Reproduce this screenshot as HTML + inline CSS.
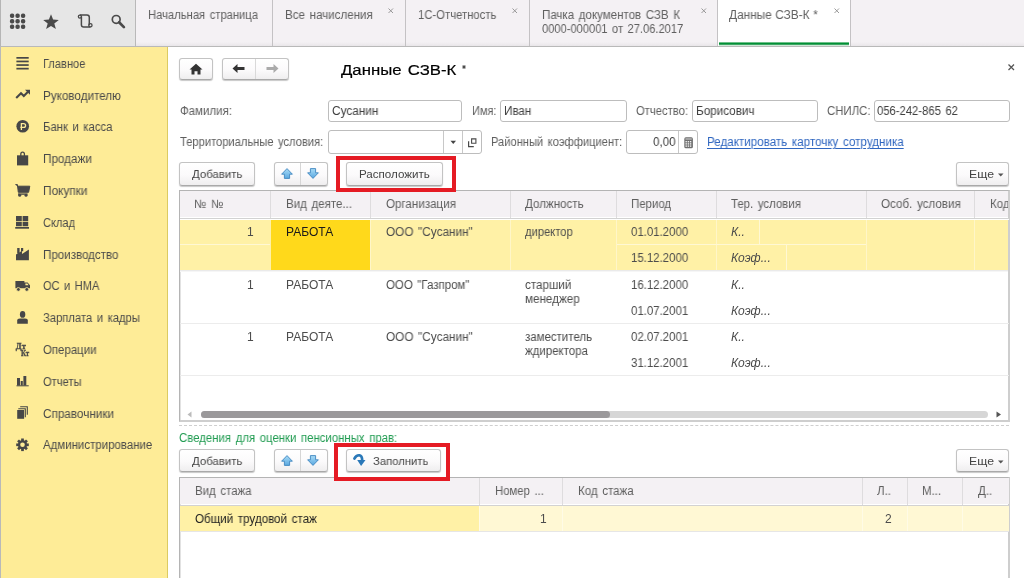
<!DOCTYPE html>
<html><head><meta charset="utf-8"><style>
html,body{margin:0;padding:0;}
body{width:1024px;height:578px;position:relative;overflow:hidden;background:#fff;font-family:"Liberation Sans",sans-serif;}
.a{position:absolute;}
.t{position:absolute;white-space:nowrap;transform-origin:0 0;will-change:transform;}
svg{will-change:transform;}
svg.a{overflow:visible;}
</style></head><body>
<div class="a" style="left:0px;top:0px;width:136px;height:46px;background:#e6e6e6;"></div>
<div class="a" style="left:0px;top:0px;width:1px;height:46px;background:#b5b5b5;"></div>
<div class="a" style="left:136px;top:0px;width:888px;height:46px;background:linear-gradient(#f4f1f4 0,#f4f1f4 42px,#e9e6e9 46px);"></div>
<div class="a" style="left:135px;top:0px;width:1px;height:46px;background:#b9b9b9;"></div>
<div class="a" style="left:0px;top:46px;width:1024px;height:1px;background:#b9b9b9;"></div>
<svg class="a" style="left:10px;top:14px" width="15" height="15" viewBox="0 0 15 15"><rect x="-0.1" y="-0.4" width="4.4" height="4.4" rx="1.9" fill="#4a4a4a"/><rect x="-0.1" y="5.1" width="4.4" height="4.4" rx="1.9" fill="#4a4a4a"/><rect x="-0.1" y="10.6" width="4.4" height="4.4" rx="1.9" fill="#4a4a4a"/><rect x="5.4" y="-0.4" width="4.4" height="4.4" rx="1.9" fill="#4a4a4a"/><rect x="5.4" y="5.1" width="4.4" height="4.4" rx="1.9" fill="#4a4a4a"/><rect x="5.4" y="10.6" width="4.4" height="4.4" rx="1.9" fill="#4a4a4a"/><rect x="10.9" y="-0.4" width="4.4" height="4.4" rx="1.9" fill="#4a4a4a"/><rect x="10.9" y="5.1" width="4.4" height="4.4" rx="1.9" fill="#4a4a4a"/><rect x="10.9" y="10.6" width="4.4" height="4.4" rx="1.9" fill="#4a4a4a"/></svg>
<svg class="a" style="left:43px;top:14px" width="16" height="16" viewBox="0 0 16 16"><path d="M8 0.3 L10.1 5.6 L15.8 5.9 L11.3 9.5 L12.9 15.1 L8 11.9 L3.1 15.1 L4.7 9.5 L0.2 5.9 L5.9 5.6 Z" fill="#4a4a4a"/></svg>
<svg class="a" style="left:0;top:0" width="136" height="46" viewBox="0 0 136 46"><path d="M79.8 14.9 H87 Q89.3 14.9 89.3 17.2 V25.2 M81.4 16.6 V24.7 Q81.4 27 83.7 27 H90.5" fill="none" stroke="#4a4a4a" stroke-width="1.5"/><circle cx="79.9" cy="16.6" r="1.55" fill="none" stroke="#4a4a4a" stroke-width="1.3"/><circle cx="90.4" cy="25.3" r="1.65" fill="none" stroke="#4a4a4a" stroke-width="1.3"/><circle cx="116.2" cy="19.4" r="3.9" fill="none" stroke="#4a4a4a" stroke-width="1.7"/><path d="M119.1 22.3 L123.9 27.1" stroke="#4a4a4a" stroke-width="2.7" stroke-linecap="round"/></svg>
<div class="a" style="left:272px;top:0px;width:1px;height:46px;background:#c4c2c4;"></div>
<div class="a" style="left:405px;top:0px;width:1px;height:46px;background:#c4c2c4;"></div>
<div class="a" style="left:529px;top:0px;width:1px;height:46px;background:#c4c2c4;"></div>
<div class="a" style="left:717px;top:0px;width:1px;height:46px;background:#c4c2c4;"></div>
<div class="a" style="left:850px;top:0px;width:1px;height:46px;background:#c4c2c4;"></div>
<div class="a" style="left:718px;top:0px;width:132px;height:46px;background:#ffffff;"></div>
<div class="a" style="left:719px;top:42px;width:130px;height:1px;background:#6cbf88;"></div>
<div class="a" style="left:719px;top:43px;width:130px;height:1px;background:#009035;"></div>
<div class="a" style="left:719px;top:44px;width:130px;height:1px;background:#3da664;"></div>
<div class="a" style="left:719px;top:45px;width:130px;height:1px;background:#cfe8d7;"></div>
<div class="t" style="left:148.00px;top:8.94px;font-size:12px;line-height:12px;color:#606060;transform:scaleX(0.9353);word-spacing:1.5px;">Начальная страница</div>
<div class="t" style="left:284.50px;top:8.94px;font-size:12px;line-height:12px;color:#606060;transform:scaleX(0.9645);word-spacing:1.5px;">Все начисления</div>
<div class="t" style="left:417.60px;top:8.94px;font-size:12px;line-height:12px;color:#606060;transform:scaleX(0.9411);word-spacing:1.5px;">1С-Отчетность</div>
<div class="t" style="left:541.60px;top:8.94px;font-size:12px;line-height:12px;color:#606060;transform:scaleX(0.9607);word-spacing:1.5px;">Пачка документов СЗВ К</div>
<div class="t" style="left:541.60px;top:23.34px;font-size:12px;line-height:12px;color:#606060;transform:scaleX(0.9267);word-spacing:1.5px;">0000-000001 от 27.06.2017</div>
<div class="t" style="left:729.30px;top:8.94px;font-size:12px;line-height:12px;color:#606060;transform:scaleX(0.9846);word-spacing:0.3px;">Данные СЗВ-К *</div>
<svg class="a" style="left:388px;top:8px" width="5.5" height="5.5" viewBox="0 0 5.5 5.5"><path d="M0.5 0.5 L5.0 5.0 M5.0 0.5 L0.5 5.0" stroke="#8f8f8f" stroke-width="0.9"/></svg>
<svg class="a" style="left:512px;top:8px" width="5.5" height="5.5" viewBox="0 0 5.5 5.5"><path d="M0.5 0.5 L5.0 5.0 M5.0 0.5 L0.5 5.0" stroke="#8f8f8f" stroke-width="0.9"/></svg>
<svg class="a" style="left:700.5px;top:8px" width="5.5" height="5.5" viewBox="0 0 5.5 5.5"><path d="M0.5 0.5 L5.0 5.0 M5.0 0.5 L0.5 5.0" stroke="#8f8f8f" stroke-width="0.9"/></svg>
<svg class="a" style="left:834px;top:8px" width="5.5" height="5.5" viewBox="0 0 5.5 5.5"><path d="M0.5 0.5 L5.0 5.0 M5.0 0.5 L0.5 5.0" stroke="#8f8f8f" stroke-width="0.9"/></svg>
<div class="a" style="left:0px;top:47px;width:168px;height:531px;background:#feec97;"></div>
<div class="a" style="left:0px;top:47px;width:1px;height:531px;background:#b9b9b9;"></div>
<div class="a" style="left:167px;top:47px;width:1px;height:531px;background:#dccb62;"></div>
<div class="t" style="left:43.00px;top:57.74px;font-size:12px;line-height:12px;color:#4a4a4a;transform:scaleX(0.9226);word-spacing:1.5px;">Главное</div>
<div class="t" style="left:43.00px;top:89.54px;font-size:12px;line-height:12px;color:#4a4a4a;transform:scaleX(0.9731);word-spacing:1.5px;">Руководителю</div>
<div class="t" style="left:43.00px;top:121.34px;font-size:12px;line-height:12px;color:#4a4a4a;transform:scaleX(0.9421);word-spacing:1.5px;">Банк и касса</div>
<div class="t" style="left:43.00px;top:153.14px;font-size:12px;line-height:12px;color:#4a4a4a;transform:scaleX(0.9734);word-spacing:1.5px;">Продажи</div>
<div class="t" style="left:43.00px;top:184.94px;font-size:12px;line-height:12px;color:#4a4a4a;transform:scaleX(0.9835);word-spacing:1.5px;">Покупки</div>
<div class="t" style="left:43.00px;top:216.74px;font-size:12px;line-height:12px;color:#4a4a4a;transform:scaleX(0.9229);word-spacing:1.5px;">Склад</div>
<div class="t" style="left:43.00px;top:248.54px;font-size:12px;line-height:12px;color:#4a4a4a;transform:scaleX(0.9648);word-spacing:1.5px;">Производство</div>
<div class="t" style="left:43.00px;top:280.34px;font-size:12px;line-height:12px;color:#4a4a4a;transform:scaleX(0.9241);word-spacing:1.5px;">ОС и НМА</div>
<div class="t" style="left:43.00px;top:312.14px;font-size:12px;line-height:12px;color:#4a4a4a;transform:scaleX(0.9370);word-spacing:1.5px;">Зарплата и кадры</div>
<div class="t" style="left:43.00px;top:343.94px;font-size:12px;line-height:12px;color:#4a4a4a;transform:scaleX(0.9526);word-spacing:1.5px;">Операции</div>
<div class="t" style="left:43.00px;top:375.74px;font-size:12px;line-height:12px;color:#4a4a4a;transform:scaleX(0.9326);word-spacing:1.5px;">Отчеты</div>
<div class="t" style="left:43.00px;top:407.54px;font-size:12px;line-height:12px;color:#4a4a4a;transform:scaleX(0.9765);word-spacing:1.5px;">Справочники</div>
<div class="t" style="left:43.00px;top:439.34px;font-size:12px;line-height:12px;color:#4a4a4a;transform:scaleX(0.9551);word-spacing:1.5px;">Администрирование</div>
<svg class="a" style="left:0;top:0" width="168" height="578" viewBox="0 0 168 578"><rect x="16.4" y="57.0" width="12.3" height="1.7" fill="#474747"/><rect x="16.4" y="60.6" width="12.3" height="1.7" fill="#474747"/><rect x="16.4" y="64.2" width="12.3" height="1.7" fill="#474747"/><rect x="16.4" y="67.8" width="12.3" height="1.7" fill="#474747"/><path d="M16.2 98 L21 93.3 L23.8 96 L28 91.8" fill="none" stroke="#474747" stroke-width="2.1" stroke-linejoin="miter"/><path d="M25 89.8 H30 V94.8 Z" fill="#474747"/><circle cx="22.7" cy="126.3" r="6.3" fill="#474747"/><path d="M21.4 130 V123.6 H23.6 Q25.6 123.6 25.6 125.5 Q25.6 127.4 23.6 127.4 H20.3" fill="none" stroke="#feec97" stroke-width="1.3"/><path d="M17 155.3 H28.2 V165.4 H17 Z" fill="#474747"/><path d="M20.8 157.5 V154.3 Q20.8 152.2 22.6 152.2 Q24.4 152.2 24.4 154.3 V157.5" fill="none" stroke="#474747" stroke-width="1.3"/><path d="M15.4 184.6 H17.4 L18.3 192.3 H28.6 L29.8 186.2 H17.2" fill="#474747" stroke="#474747" stroke-width="1"/><rect x="18" y="193.4" width="9.6" height="1.4" fill="#474747"/><circle cx="19.7" cy="195.3" r="1.5" fill="#474747"/><circle cx="26" cy="195.3" r="1.5" fill="#474747"/><path d="M16 215.9 H21.8 V221.3 H16 Z M22.6 215.9 H28.2 V221.3 H22.6 Z M16 222 H21.8 V226.3 H16 Z M22.6 222 H28.2 V226.3 H22.6 Z" fill="#474747"/><rect x="15.2" y="227" width="13.8" height="1.7" fill="#474747"/><path d="M16 260.2 V254.5 L22 250.8 V254 L28.9 249.5 V260.2 Z" fill="#474747"/><path d="M17.2 247.9 H19.6 V253.5 H17.2 Z M21 247.9 H23.2 V251.2 H21 Z" fill="#474747"/><path d="M15.4 281.1 H24.4 V288.2 H15.4 Z M24.4 282.5 H27.6 L30 285.2 V288.2 H24.4 Z" fill="#474747"/><path d="M25.4 283.4 H27.4 L28.6 285.3 H25.4 Z" fill="#feec97"/><circle cx="18.4" cy="289.4" r="1.9" fill="#474747" stroke="#feec97" stroke-width="0.8"/><circle cx="26.8" cy="289.4" r="1.9" fill="#474747" stroke="#feec97" stroke-width="0.8"/><ellipse cx="22.6" cy="314.4" rx="2.7" ry="3.4" fill="#474747"/><path d="M17.2 323.8 V320.6 Q17.2 318.4 20 318.4 H25 Q27.8 318.4 27.8 320.6 V323.8 Z" fill="#474747"/><text x="15.8" y="348.6" font-family="Liberation Serif" font-weight="bold" font-size="8" fill="#474747" stroke="#474747" stroke-width="0.3" textLength="10" lengthAdjust="spacingAndGlyphs">Дт</text><text x="21" y="355.5" font-family="Liberation Serif" font-weight="bold" font-size="8" fill="#474747" stroke="#474747" stroke-width="0.3" textLength="8.2" lengthAdjust="spacingAndGlyphs">Кт</text><path d="M17 378 H20 V385.5 H17 Z M20.7 381 H22.8 V385.5 H20.7 Z M23.4 376 H26.3 V385.5 H23.4 Z" fill="#474747"/><rect x="16.5" y="385.3" width="12.2" height="1" fill="#474747"/><rect x="17.2" y="410" width="6.9" height="8.8" fill="#474747"/><path d="M18.3 408.7 H25.3 V417.2" fill="none" stroke="#474747" stroke-width="1.1"/><path d="M20.2 406.8 H27.3 V414.8" fill="none" stroke="#474747" stroke-width="1.1"/><g transform="translate(22.5 444.8)"><circle r="4.6" fill="#474747"/><rect x="-1.35" y="-6.3" width="2.7" height="3" fill="#474747" transform="rotate(0)"/><rect x="-1.35" y="-6.3" width="2.7" height="3" fill="#474747" transform="rotate(45)"/><rect x="-1.35" y="-6.3" width="2.7" height="3" fill="#474747" transform="rotate(90)"/><rect x="-1.35" y="-6.3" width="2.7" height="3" fill="#474747" transform="rotate(135)"/><rect x="-1.35" y="-6.3" width="2.7" height="3" fill="#474747" transform="rotate(180)"/><rect x="-1.35" y="-6.3" width="2.7" height="3" fill="#474747" transform="rotate(225)"/><rect x="-1.35" y="-6.3" width="2.7" height="3" fill="#474747" transform="rotate(270)"/><rect x="-1.35" y="-6.3" width="2.7" height="3" fill="#474747" transform="rotate(315)"/><circle r="2.3" fill="#feec97"/></g></svg>
<div class="a" style="left:179px;top:58px;width:34px;height:22px;box-sizing:border-box;border:1px solid #c3c3c3;border-bottom-color:#a9a9a9;border-radius:3px;background:linear-gradient(#ffffff,#fbfafb 55%,#efeeef);box-shadow:0 1px 1px rgba(0,0,0,0.22);"></div>
<svg class="a" style="left:189px;top:63px" width="14" height="12" viewBox="0 0 14 12"><path d="M7 0.8 L13.5 6.5 H11.5 V11.5 H8.5 V8.2 H5.5 V11.5 H2.5 V6.5 H0.5 Z" fill="#333"/></svg>
<div class="a" style="left:222px;top:58px;width:67px;height:22px;box-sizing:border-box;border:1px solid #c3c3c3;border-bottom-color:#a9a9a9;border-radius:3px;background:linear-gradient(#ffffff,#fbfafb 55%,#efeeef);box-shadow:0 1px 1px rgba(0,0,0,0.22);"></div>
<div class="a" style="left:255px;top:59px;width:1px;height:20px;background:#d9d9d9;"></div>
<svg class="a" style="left:232px;top:63px" width="14" height="11" viewBox="0 0 14 11"><path d="M0.5 5.5 L5.5 1 V4 H12.5 V7 H5.5 V10 Z" fill="#333"/></svg>
<svg class="a" style="left:265px;top:63px" width="14" height="11" viewBox="0 0 14 11"><path d="M13.5 5.5 L8.5 1 V4 H1.5 V7 H8.5 V10 Z" fill="#aaa"/></svg>
<div class="t" style="left:341.00px;top:61.88px;font-size:15.5px;line-height:15.5px;color:#000;transform:scaleX(1.0807);word-spacing:1.5px;-webkit-text-stroke:0.2px #000;">Данные СЗВ-К</div>
<svg class="a" style="left:462px;top:65px" width="4" height="4" viewBox="0 0 4 4"><path d="M2 0 V4 M0.3 1 L3.7 3 M0.3 3 L3.7 1" stroke="#333" stroke-width="0.9"/></svg>
<svg class="a" style="left:1008px;top:63.5px" width="6.5" height="6.5" viewBox="0 0 6.5 6.5"><path d="M0.5 0.5 L6.0 6.0 M6.0 0.5 L0.5 6.0" stroke="#555" stroke-width="1.25"/></svg>
<div class="t" style="left:179.70px;top:104.94px;font-size:12px;line-height:12px;color:#5e5e5e;transform:scaleX(0.9564);word-spacing:1.5px;">Фамилия:</div>
<div class="a" style="left:328px;top:100px;width:134px;height:22px;box-sizing:border-box;border:1px solid #bdbdbd;border-radius:3px;background:#fff;"></div>
<div class="t" style="left:331.80px;top:104.94px;font-size:12px;line-height:12px;color:#404040;transform:scaleX(0.9842);word-spacing:1.5px;">Сусанин</div>
<div class="t" style="left:471.50px;top:104.94px;font-size:12px;line-height:12px;color:#5e5e5e;transform:scaleX(0.9138);word-spacing:1.5px;">Имя:</div>
<div class="a" style="left:500px;top:100px;width:127px;height:22px;box-sizing:border-box;border:1px solid #bdbdbd;border-radius:3px;background:#fff;"></div>
<div class="t" style="left:503.80px;top:104.94px;font-size:12px;line-height:12px;color:#404040;transform:scaleX(0.9695);word-spacing:1.5px;">Иван</div>
<div class="t" style="left:636.00px;top:104.94px;font-size:12px;line-height:12px;color:#5e5e5e;transform:scaleX(0.9372);word-spacing:1.5px;">Отчество:</div>
<div class="a" style="left:692px;top:100px;width:126px;height:22px;box-sizing:border-box;border:1px solid #bdbdbd;border-radius:3px;background:#fff;"></div>
<div class="t" style="left:695.80px;top:104.94px;font-size:12px;line-height:12px;color:#404040;transform:scaleX(0.9747);word-spacing:1.5px;">Борисович</div>
<div class="t" style="left:826.70px;top:104.94px;font-size:12px;line-height:12px;color:#5e5e5e;transform:scaleX(0.9495);word-spacing:1.5px;">СНИЛС:</div>
<div class="a" style="left:874px;top:100px;width:136px;height:22px;box-sizing:border-box;border:1px solid #bdbdbd;border-radius:3px;background:#fff;"></div>
<div class="t" style="left:876.70px;top:104.94px;font-size:12px;line-height:12px;color:#404040;transform:scaleX(0.9380);word-spacing:1.5px;">056-242-865 62</div>
<div class="t" style="left:179.70px;top:135.64px;font-size:12px;line-height:12px;color:#5e5e5e;transform:scaleX(0.9295);word-spacing:1.5px;">Территориальные условия:</div>
<div class="a" style="left:328px;top:130px;width:154px;height:24px;box-sizing:border-box;border:1px solid #bdbdbd;border-radius:3px;background:#fff;"></div>
<div class="a" style="left:443px;top:131px;width:1px;height:22px;background:#c8c8c8;"></div>
<div class="a" style="left:462px;top:131px;width:1px;height:22px;background:#c8c8c8;"></div>
<svg class="a" style="left:450px;top:140px" width="7" height="5" viewBox="0 0 7 5"><path d="M0.5 0.8 H6 L3.25 4 Z" fill="#444"/></svg>
<svg class="a" style="left:467px;top:138px" width="10" height="10" viewBox="0 0 10 10"><path d="M4.6 0.9 H8.9 V5.3 H4.6 Z" fill="none" stroke="#4a4a4a" stroke-width="1.1"/><path d="M1.6 3.2 V8.7 H6.8" fill="none" stroke="#4a4a4a" stroke-width="1.2"/></svg>
<div class="t" style="left:491.00px;top:135.64px;font-size:12px;line-height:12px;color:#5e5e5e;transform:scaleX(0.9279);word-spacing:1.5px;">Районный коэффициент:</div>
<div class="a" style="left:626px;top:130px;width:72px;height:24px;box-sizing:border-box;border:1px solid #bdbdbd;border-radius:3px;background:#fff;"></div>
<div class="a" style="left:678px;top:131px;width:1px;height:22px;background:#c8c8c8;"></div>
<div class="t" style="left:653.30px;top:135.30px;font-size:13px;line-height:13px;color:#404040;transform:scaleX(0.8974);word-spacing:1.5px;">0,00</div>
<svg class="a" style="left:684px;top:137px" width="9" height="11" viewBox="0 0 9 11"><rect x="0.3" y="0.3" width="8.6" height="11" rx="1.6" fill="#6e6e6e"/><rect x="1.4" y="1.5" width="6.4" height="1" fill="#d8d8d8"/><rect x="1.5" y="4.0" width="1.4" height="1.4" fill="#f0f0f0"/><rect x="1.5" y="6.2" width="1.4" height="1.4" fill="#f0f0f0"/><rect x="1.5" y="8.4" width="1.4" height="1.4" fill="#f0f0f0"/><rect x="3.7" y="4.0" width="1.4" height="1.4" fill="#f0f0f0"/><rect x="3.7" y="6.2" width="1.4" height="1.4" fill="#f0f0f0"/><rect x="3.7" y="8.4" width="1.4" height="1.4" fill="#f0f0f0"/><rect x="5.9" y="4.0" width="1.4" height="1.4" fill="#f0f0f0"/><rect x="5.9" y="6.2" width="1.4" height="1.4" fill="#f0f0f0"/><rect x="5.9" y="8.4" width="1.4" height="1.4" fill="#f0f0f0"/></svg>
<div class="t" style="left:706.57px;top:135.72px;font-size:12.5px;line-height:12.5px;color:#2f66c0;transform:scaleX(0.9295);word-spacing:1.5px;text-decoration:underline;text-underline-offset:1.5px;">Редактировать карточку сотрудника</div>
<div class="a" style="left:179px;top:162px;width:76px;height:24px;box-sizing:border-box;border:1px solid #c3c3c3;border-bottom-color:#a9a9a9;border-radius:3px;background:linear-gradient(#ffffff,#fbfafb 55%,#efeeef);box-shadow:0 1px 1px rgba(0,0,0,0.22);"></div>
<div class="t" style="left:192.30px;top:167.88px;font-size:11.6px;line-height:11.6px;color:#444;transform:scaleX(0.9825);word-spacing:1.5px;">Добавить</div>
<div class="a" style="left:274px;top:162px;width:54px;height:24px;box-sizing:border-box;border:1px solid #c3c3c3;border-bottom-color:#a9a9a9;border-radius:3px;background:linear-gradient(#ffffff,#fbfafb 55%,#efeeef);box-shadow:0 1px 1px rgba(0,0,0,0.22);"></div>
<div class="a" style="left:300px;top:163px;width:1px;height:22px;background:#d6d6d6;"></div>
<svg class="a" style="left:281px;top:168px" width="12" height="11" viewBox="0 0 12 11"><defs><linearGradient id="gb" x1="0" y1="0" x2="0" y2="1"><stop offset="0" stop-color="#a9dcf7"/><stop offset="1" stop-color="#5aa8e0"/></linearGradient></defs><path d="M6 0.6 L11.4 6.2 H8.6 V10.4 H3.4 V6.2 H0.6 Z" fill="url(#gb)" stroke="#3f86c0" stroke-width="0.9"/></svg>
<svg class="a" style="left:307px;top:168px" width="12" height="11" viewBox="0 0 12 11"><defs><linearGradient id="gb" x1="0" y1="0" x2="0" y2="1"><stop offset="0" stop-color="#a9dcf7"/><stop offset="1" stop-color="#5aa8e0"/></linearGradient></defs><path d="M6 10.4 L11.4 4.8 H8.6 V0.6 H3.4 V4.8 H0.6 Z" fill="url(#gb)" stroke="#3f86c0" stroke-width="0.9"/></svg>
<div class="a" style="left:346px;top:162px;width:97px;height:24px;box-sizing:border-box;border:1px solid #c3c3c3;border-bottom-color:#a9a9a9;border-radius:3px;background:linear-gradient(#ffffff,#fbfafb 55%,#efeeef);box-shadow:0 1px 1px rgba(0,0,0,0.22);"></div>
<div class="a" style="left:956px;top:162px;width:53px;height:24px;box-sizing:border-box;border:1px solid #c3c3c3;border-bottom-color:#a9a9a9;border-radius:3px;background:linear-gradient(#ffffff,#fbfafb 55%,#efeeef);box-shadow:0 1px 1px rgba(0,0,0,0.22);"></div>
<div class="t" style="left:968.50px;top:167.88px;font-size:11.6px;line-height:11.6px;color:#444;transform:scaleX(1.0587);word-spacing:1.5px;">Еще</div>
<svg class="a" style="left:998px;top:173px" width="6" height="4" viewBox="0 0 6 4"><path d="M0 0.5 H5.5 L2.75 3.5 Z" fill="#555"/></svg>
<div class="t" style="left:359.10px;top:167.88px;font-size:11.6px;line-height:11.6px;color:#444;transform:scaleX(0.9969);word-spacing:1.5px;">Расположить</div>
<div class="a" style="left:179px;top:190px;width:831px;height:232px;box-sizing:border-box;border:1px solid #b4b4b4;border-right:2px solid #cecece;border-bottom:2px solid #cecece;background:#fff;"></div>
<div class="a" style="left:180px;top:191px;width:1px;height:229px;background:#e2e2e2;"></div>
<div class="a" style="left:180px;top:191px;width:828px;height:26px;background:#f4f1f4;"></div>
<div class="a" style="left:180px;top:217px;width:829px;height:1px;background:#ffffff;"></div>
<div class="a" style="left:180px;top:218px;width:829px;height:1px;background:#d2d2d2;"></div>
<div class="a" style="left:180px;top:219px;width:829px;height:1px;background:#ffffff;"></div>
<div class="a" style="left:270px;top:191px;width:1px;height:27px;background:#dedcde;"></div>
<div class="a" style="left:370px;top:191px;width:1px;height:27px;background:#dedcde;"></div>
<div class="a" style="left:510px;top:191px;width:1px;height:27px;background:#dedcde;"></div>
<div class="a" style="left:616px;top:191px;width:1px;height:27px;background:#dedcde;"></div>
<div class="a" style="left:716px;top:191px;width:1px;height:27px;background:#dedcde;"></div>
<div class="a" style="left:866px;top:191px;width:1px;height:27px;background:#dedcde;"></div>
<div class="a" style="left:974px;top:191px;width:1px;height:27px;background:#dedcde;"></div>
<div class="t" style="left:193.94px;top:197.64px;font-size:12px;line-height:12px;color:#5e5e5e;transform:scaleX(0.9627);word-spacing:1.5px;">№ №</div>
<div class="t" style="left:285.60px;top:197.64px;font-size:12px;line-height:12px;color:#5e5e5e;transform:scaleX(0.9602);word-spacing:1.5px;">Вид деяте...</div>
<div class="t" style="left:385.80px;top:197.64px;font-size:12px;line-height:12px;color:#5e5e5e;transform:scaleX(0.9655);word-spacing:1.5px;">Организация</div>
<div class="t" style="left:525.00px;top:197.64px;font-size:12px;line-height:12px;color:#5e5e5e;transform:scaleX(0.9653);word-spacing:1.5px;">Должность</div>
<div class="t" style="left:631.20px;top:197.64px;font-size:12px;line-height:12px;color:#5e5e5e;transform:scaleX(0.9528);word-spacing:1.5px;">Период</div>
<div class="t" style="left:730.80px;top:197.64px;font-size:12px;line-height:12px;color:#5e5e5e;transform:scaleX(0.9517);word-spacing:1.5px;">Тер. условия</div>
<div class="t" style="left:881.00px;top:197.64px;font-size:12px;line-height:12px;color:#5e5e5e;transform:scaleX(0.9678);word-spacing:1.5px;">Особ. условия</div>
<div class="t" style="left:990.00px;top:197.64px;font-size:12px;line-height:12px;color:#5e5e5e;transform:scaleX(0.9550);word-spacing:1.5px;">Код</div>
<div class="a" style="left:180px;top:220px;width:828px;height:50px;background:#fff1a6;"></div>
<div class="a" style="left:271px;top:220px;width:99px;height:50px;background:#ffd91b;"></div>
<div class="a" style="left:370px;top:220px;width:1px;height:50px;background:#fff6c8;"></div>
<div class="a" style="left:510px;top:220px;width:1px;height:50px;background:#fff6c8;"></div>
<div class="a" style="left:616px;top:220px;width:1px;height:50px;background:#fff6c8;"></div>
<div class="a" style="left:716px;top:220px;width:1px;height:50px;background:#fff6c8;"></div>
<div class="a" style="left:866px;top:220px;width:1px;height:50px;background:#fff6c8;"></div>
<div class="a" style="left:974px;top:220px;width:1px;height:50px;background:#fff6c8;"></div>
<div class="a" style="left:180px;top:244px;width:90px;height:1px;background:#fff8d4;"></div>
<div class="a" style="left:617px;top:244px;width:249px;height:1px;background:#fff8d4;"></div>
<div class="a" style="left:759px;top:220px;width:1px;height:24px;background:#fff8d4;"></div>
<div class="a" style="left:786px;top:245px;width:1px;height:25px;background:#fff8d4;"></div>
<div class="a" style="left:180px;top:270px;width:828px;height:1px;background:#eaeaea;"></div>
<div class="a" style="left:180px;top:271px;width:828px;height:1px;background:#f6f6f6;"></div>
<div class="a" style="left:180px;top:323px;width:829px;height:1px;background:#ececec;"></div>
<div class="a" style="left:180px;top:375px;width:829px;height:1px;background:#ececec;"></div>
<div class="t" style="left:246.51px;top:225.94px;font-size:12px;line-height:12px;color:#4c4c4c;transform:scaleX(0.9550);word-spacing:1.5px;">1</div>
<div class="t" style="left:285.50px;top:225.94px;font-size:12px;line-height:12px;color:#1a1a1a;transform:scaleX(0.9998);word-spacing:1.5px;">РАБОТА</div>
<div class="t" style="left:386.00px;top:225.94px;font-size:12px;line-height:12px;color:#4c4c4c;transform:scaleX(0.9790);word-spacing:1.5px;">ООО &quot;Сусанин&quot;</div>
<div class="t" style="left:525.30px;top:225.94px;font-size:12px;line-height:12px;color:#4c4c4c;transform:scaleX(0.9325);word-spacing:1.5px;">директор</div>
<div class="t" style="left:630.70px;top:225.94px;font-size:12px;line-height:12px;color:#4c4c4c;transform:scaleX(0.9522);word-spacing:1.5px;">01.01.2000</div>
<div class="t" style="left:630.70px;top:251.94px;font-size:12px;line-height:12px;color:#4c4c4c;transform:scaleX(0.9522);word-spacing:1.5px;">15.12.2000</div>
<div class="t" style="left:731.20px;top:225.94px;font-size:12px;line-height:12px;color:#4c4c4c;transform:scaleX(1.0156);word-spacing:1.5px;font-style:italic;">К..</div>
<div class="t" style="left:731.20px;top:251.94px;font-size:12px;line-height:12px;color:#4c4c4c;transform:scaleX(1.0051);word-spacing:1.5px;font-style:italic;">Коэф...</div>
<div class="t" style="left:246.51px;top:278.94px;font-size:12px;line-height:12px;color:#4c4c4c;transform:scaleX(0.9550);word-spacing:1.5px;">1</div>
<div class="t" style="left:285.50px;top:278.94px;font-size:12px;line-height:12px;color:#4c4c4c;transform:scaleX(0.9998);word-spacing:1.5px;">РАБОТА</div>
<div class="t" style="left:386.00px;top:278.94px;font-size:12px;line-height:12px;color:#4c4c4c;transform:scaleX(0.9550);word-spacing:1.5px;">ООО &quot;Газпром&quot;</div>
<div class="t" style="left:525.30px;top:278.94px;font-size:12px;line-height:12px;color:#4c4c4c;transform:scaleX(0.9715);word-spacing:1.5px;">старший</div>
<div class="t" style="left:525.30px;top:292.94px;font-size:12px;line-height:12px;color:#4c4c4c;transform:scaleX(0.9706);word-spacing:1.5px;">менеджер</div>
<div class="t" style="left:630.70px;top:278.94px;font-size:12px;line-height:12px;color:#4c4c4c;transform:scaleX(0.9522);word-spacing:1.5px;">16.12.2000</div>
<div class="t" style="left:630.70px;top:304.94px;font-size:12px;line-height:12px;color:#4c4c4c;transform:scaleX(0.9522);word-spacing:1.5px;">01.07.2001</div>
<div class="t" style="left:731.20px;top:278.94px;font-size:12px;line-height:12px;color:#4c4c4c;transform:scaleX(1.0156);word-spacing:1.5px;font-style:italic;">К..</div>
<div class="t" style="left:731.20px;top:304.94px;font-size:12px;line-height:12px;color:#4c4c4c;transform:scaleX(1.0051);word-spacing:1.5px;font-style:italic;">Коэф...</div>
<div class="t" style="left:246.51px;top:330.54px;font-size:12px;line-height:12px;color:#4c4c4c;transform:scaleX(0.9550);word-spacing:1.5px;">1</div>
<div class="t" style="left:285.50px;top:330.54px;font-size:12px;line-height:12px;color:#4c4c4c;transform:scaleX(0.9998);word-spacing:1.5px;">РАБОТА</div>
<div class="t" style="left:386.00px;top:330.54px;font-size:12px;line-height:12px;color:#4c4c4c;transform:scaleX(0.9790);word-spacing:1.5px;">ООО &quot;Сусанин&quot;</div>
<div class="t" style="left:525.30px;top:330.54px;font-size:12px;line-height:12px;color:#4c4c4c;transform:scaleX(0.9551);word-spacing:1.5px;">заместитель</div>
<div class="t" style="left:525.30px;top:344.54px;font-size:12px;line-height:12px;color:#4c4c4c;transform:scaleX(0.9551);word-spacing:1.5px;">ждиректора</div>
<div class="t" style="left:630.70px;top:330.54px;font-size:12px;line-height:12px;color:#4c4c4c;transform:scaleX(0.9522);word-spacing:1.5px;">02.07.2001</div>
<div class="t" style="left:630.70px;top:357.44px;font-size:12px;line-height:12px;color:#4c4c4c;transform:scaleX(0.9522);word-spacing:1.5px;">31.12.2001</div>
<div class="t" style="left:731.20px;top:330.54px;font-size:12px;line-height:12px;color:#4c4c4c;transform:scaleX(1.0156);word-spacing:1.5px;font-style:italic;">К..</div>
<div class="t" style="left:731.20px;top:357.44px;font-size:12px;line-height:12px;color:#4c4c4c;transform:scaleX(1.0051);word-spacing:1.5px;font-style:italic;">Коэф...</div>
<div class="a" style="left:201px;top:411px;width:787px;height:7px;background:#d6d6d6;border-radius:3.5px;"></div>
<div class="a" style="left:201px;top:411px;width:409px;height:7px;background:#9b999b;border-radius:3.5px;"></div>
<svg class="a" style="left:187px;top:411px" width="5" height="7" viewBox="0 0 5 7"><path d="M4.5 0.5 V6.5 L0.5 3.5 Z" fill="#bbb"/></svg>
<svg class="a" style="left:996px;top:411px" width="6" height="7" viewBox="0 0 6 7"><path d="M0.5 0.5 V6.5 L5 3.5 Z" fill="#555"/></svg>
<div class="a" style="left:179px;top:425px;width:830px;height:0;border-top:1px dashed #cfcfcf;"></div>
<div class="t" style="left:179.40px;top:431.94px;font-size:12px;line-height:12px;color:#1f9b50;transform:scaleX(0.9490);word-spacing:1.5px;">Сведения для оценки пенсионных прав:</div>
<div class="a" style="left:179px;top:449px;width:76px;height:23px;box-sizing:border-box;border:1px solid #c3c3c3;border-bottom-color:#a9a9a9;border-radius:3px;background:linear-gradient(#ffffff,#fbfafb 55%,#efeeef);box-shadow:0 1px 1px rgba(0,0,0,0.22);"></div>
<div class="t" style="left:192.30px;top:454.88px;font-size:11.6px;line-height:11.6px;color:#444;transform:scaleX(0.9825);word-spacing:1.5px;">Добавить</div>
<div class="a" style="left:274px;top:449px;width:54px;height:23px;box-sizing:border-box;border:1px solid #c3c3c3;border-bottom-color:#a9a9a9;border-radius:3px;background:linear-gradient(#ffffff,#fbfafb 55%,#efeeef);box-shadow:0 1px 1px rgba(0,0,0,0.22);"></div>
<div class="a" style="left:300px;top:450px;width:1px;height:21px;background:#d6d6d6;"></div>
<svg class="a" style="left:281px;top:455px" width="12" height="11" viewBox="0 0 12 11"><defs><linearGradient id="gb" x1="0" y1="0" x2="0" y2="1"><stop offset="0" stop-color="#a9dcf7"/><stop offset="1" stop-color="#5aa8e0"/></linearGradient></defs><path d="M6 0.6 L11.4 6.2 H8.6 V10.4 H3.4 V6.2 H0.6 Z" fill="url(#gb)" stroke="#3f86c0" stroke-width="0.9"/></svg>
<svg class="a" style="left:307px;top:455px" width="12" height="11" viewBox="0 0 12 11"><defs><linearGradient id="gb" x1="0" y1="0" x2="0" y2="1"><stop offset="0" stop-color="#a9dcf7"/><stop offset="1" stop-color="#5aa8e0"/></linearGradient></defs><path d="M6 10.4 L11.4 4.8 H8.6 V0.6 H3.4 V4.8 H0.6 Z" fill="url(#gb)" stroke="#3f86c0" stroke-width="0.9"/></svg>
<div class="a" style="left:346px;top:449px;width:95px;height:23px;box-sizing:border-box;border:1px solid #c3c3c3;border-bottom-color:#a9a9a9;border-radius:3px;background:linear-gradient(#ffffff,#fbfafb 55%,#efeeef);box-shadow:0 1px 1px rgba(0,0,0,0.22);"></div>
<div class="a" style="left:956px;top:449px;width:53px;height:23px;box-sizing:border-box;border:1px solid #c3c3c3;border-bottom-color:#a9a9a9;border-radius:3px;background:linear-gradient(#ffffff,#fbfafb 55%,#efeeef);box-shadow:0 1px 1px rgba(0,0,0,0.22);"></div>
<div class="t" style="left:968.50px;top:454.88px;font-size:11.6px;line-height:11.6px;color:#444;transform:scaleX(1.0587);word-spacing:1.5px;">Еще</div>
<svg class="a" style="left:998px;top:460px" width="6" height="4" viewBox="0 0 6 4"><path d="M0 0.5 H5.5 L2.75 3.5 Z" fill="#555"/></svg>
<div class="t" style="left:372.70px;top:454.88px;font-size:11.6px;line-height:11.6px;color:#444;transform:scaleX(0.9723);word-spacing:1.5px;">Заполнить</div>
<svg class="a" style="left:353px;top:454px" width="13" height="12" viewBox="0 0 13 12"><path d="M1.4 4.6 Q3.2 0.9 6.6 1.3 Q9.2 1.8 9.2 6.4" fill="none" stroke="#2a78b8" stroke-width="2.7" stroke-linecap="round"/><path d="M4.2 6.1 H12.5 L8.1 11.9 Z" fill="#2a78b8"/></svg>
<div class="a" style="left:179px;top:477px;width:831px;height:113px;box-sizing:border-box;border:1px solid #b4b4b4;border-right:2px solid #cecece;background:#fff;"></div>
<div class="a" style="left:180px;top:478px;width:1px;height:100px;background:#e2e2e2;"></div>
<div class="a" style="left:180px;top:478px;width:829px;height:26px;background:#f4f1f4;"></div>
<div class="a" style="left:180px;top:505px;width:829px;height:1px;background:#d2d2d2;"></div>
<div class="a" style="left:479px;top:478px;width:1px;height:27px;background:#dedcde;"></div>
<div class="a" style="left:562px;top:478px;width:1px;height:27px;background:#dedcde;"></div>
<div class="a" style="left:862px;top:478px;width:1px;height:27px;background:#dedcde;"></div>
<div class="a" style="left:907px;top:478px;width:1px;height:27px;background:#dedcde;"></div>
<div class="a" style="left:962px;top:478px;width:1px;height:27px;background:#dedcde;"></div>
<div class="t" style="left:194.60px;top:484.94px;font-size:12px;line-height:12px;color:#5e5e5e;transform:scaleX(0.9546);word-spacing:1.5px;">Вид стажа</div>
<div class="t" style="left:494.60px;top:484.94px;font-size:12px;line-height:12px;color:#5e5e5e;transform:scaleX(0.9448);word-spacing:1.5px;">Номер ...</div>
<div class="t" style="left:577.80px;top:484.94px;font-size:12px;line-height:12px;color:#5e5e5e;transform:scaleX(0.9606);word-spacing:1.5px;">Код стажа</div>
<div class="t" style="left:877.00px;top:484.94px;font-size:12px;line-height:12px;color:#5e5e5e;transform:scaleX(0.9550);word-spacing:1.5px;">Л..</div>
<div class="t" style="left:922.30px;top:484.94px;font-size:12px;line-height:12px;color:#5e5e5e;transform:scaleX(0.9550);word-spacing:1.5px;">М...</div>
<div class="t" style="left:978.00px;top:484.94px;font-size:12px;line-height:12px;color:#5e5e5e;transform:scaleX(0.9550);word-spacing:1.5px;">Д..</div>
<div class="a" style="left:180px;top:506px;width:829px;height:25px;background:#fff8d4;"></div>
<div class="a" style="left:180px;top:506px;width:299px;height:25px;background:#fff1a6;"></div>
<div class="a" style="left:479px;top:506px;width:1px;height:25px;background:#fffbe6;"></div>
<div class="a" style="left:562px;top:506px;width:1px;height:25px;background:#fffbe6;"></div>
<div class="a" style="left:862px;top:506px;width:1px;height:25px;background:#fffbe6;"></div>
<div class="a" style="left:907px;top:506px;width:1px;height:25px;background:#fffbe6;"></div>
<div class="a" style="left:962px;top:506px;width:1px;height:25px;background:#fffbe6;"></div>
<div class="a" style="left:180px;top:531px;width:829px;height:1px;background:#e6e6e6;"></div>
<div class="t" style="left:194.60px;top:513.34px;font-size:12px;line-height:12px;color:#222;transform:scaleX(0.9665);word-spacing:1.5px;">Общий трудовой стаж</div>
<div class="t" style="left:539.72px;top:513.34px;font-size:12px;line-height:12px;color:#4c4c4c;transform:scaleX(0.9550);word-spacing:1.5px;">1</div>
<div class="t" style="left:885.32px;top:513.34px;font-size:12px;line-height:12px;color:#4c4c4c;transform:scaleX(0.9550);word-spacing:1.5px;">2</div>
<div class="a" style="left:336px;top:156px;width:120px;height:36px;box-sizing:border-box;border:4px solid #e51b24;"></div>
<div class="a" style="left:334px;top:443px;width:116px;height:38px;box-sizing:border-box;border:4px solid #e51b24;"></div>
<div class="a" style="left:1008px;top:191px;width:2px;height:27px;background:#cecece;"></div>
</body></html>
